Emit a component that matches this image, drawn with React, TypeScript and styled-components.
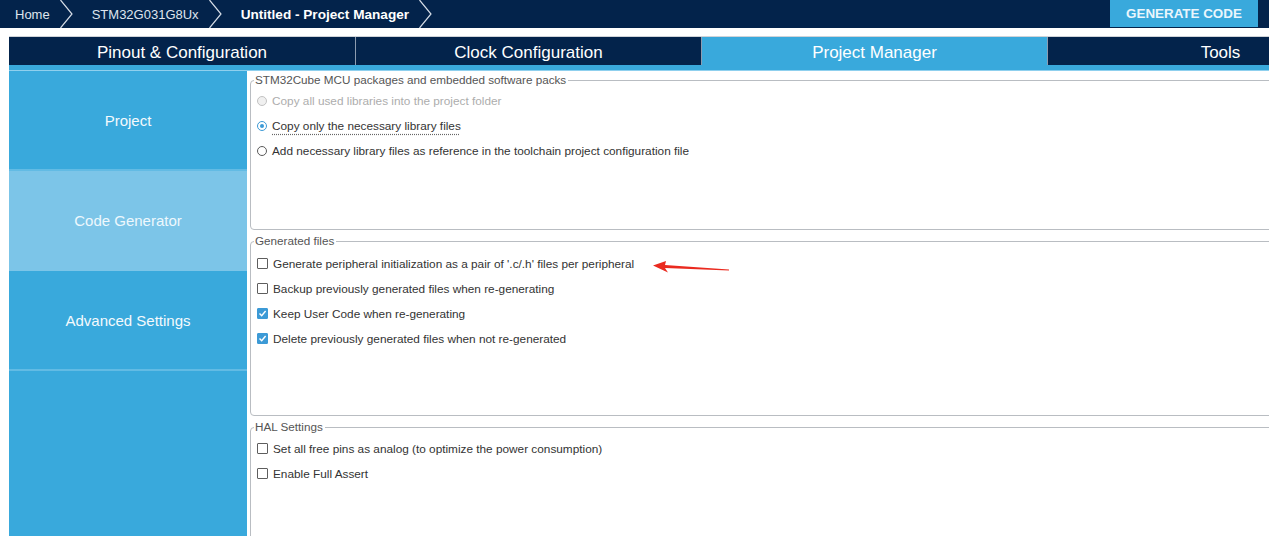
import { createGlobalStyle, styled } from "styled-components"

const NAVY = "#03234b"
const BLUE = "#39a9dc"

const GlobalStyle = createGlobalStyle`
    html, body {
        margin: 0;
        padding: 0;
        background: #ffffff;
        overflow: hidden;
    }
    body {
        font-family: "Liberation Sans", Arial, sans-serif;
    }
`
const Page = styled.div`
    position: relative;
    width: 1269px;
    height: 536px;
    overflow: hidden;
    display: flex;
    flex-direction: column;
`
const TopBar = styled.div`
    height: 28px;
    flex-shrink: 0;
    background: ${NAVY};
    display: flex;
    align-items: center;
    padding-left: 15px;
`
const Crumb = styled.span<{ $current?: boolean }>`
    font-size: ${p => (p.$current ? "13.6px" : "13px")};
    color: ${p => (p.$current ? "#ffffff" : "#dfe5ee")};
    font-weight: ${p => (p.$current ? "bold" : "normal")};
    white-space: nowrap;
`
const Chevron = styled.svg`
    width: 13px;
    height: 28px;
    margin: 0 19px 0 10px;
    flex-shrink: 0;
`
const GenerateButton = styled.button`
    margin-left: auto;
    margin-right: 11px;
    align-self: flex-start;
    height: 27px;
    width: 148px;
    border: none;
    background: ${BLUE};
    color: #eaf6fc;
    font-family: inherit;
    font-size: 13.4px;
    font-weight: bold;
    padding: 0;
`
const Main = styled.div`
    flex: 1;
    display: flex;
    flex-direction: column;
    padding: 8px 0 0 9px;
    min-height: 0;
`
const TabBar = styled.div`
    height: 28px;
    flex-shrink: 0;
    display: flex;
    background: ${NAVY};
    border-top: 1px solid #cfd3d8;
`
const Tab = styled.div<{ $active?: boolean }>`
    width: 346px;
    flex-shrink: 0;
    box-sizing: border-box;
    display: flex;
    align-items: center;
    justify-content: center;
    padding-top: 3px;
    font-size: 17px;
    color: #ffffff;
    background: ${p => (p.$active ? BLUE : NAVY)};
    border-left: 1px solid #8d9cb0;
    &:first-child {
        border-left: none;
    }
`
const TabStrip = styled.div`
    height: 5px;
    flex-shrink: 0;
    background: ${BLUE};
    border-bottom: 1px solid #8fd0ee;
`
const Body = styled.div`
    flex: 1;
    display: flex;
    min-height: 0;
`
const Sidebar = styled.div`
    width: 238px;
    flex-shrink: 0;
    background: ${BLUE};
    display: flex;
    flex-direction: column;
`
const SideItem = styled.div<{ $active?: boolean }>`
    height: 98px;
    display: flex;
    align-items: center;
    justify-content: center;
    font-size: 15px;
    color: ${p => (p.$active ? "#eef8fd" : "#f4fafd")};
    background: ${p => (p.$active ? "#7cc5e8" : BLUE)};
    border-bottom: 2px solid ${p => (p.$active ? "#7cc5e8" : "#62bbe4")};
`
const Content = styled.div`
    flex: 1;
    display: flex;
    flex-direction: column;
    padding: 2px 0 0 3px;
    margin-right: -20px;
`
const Group = styled.fieldset<{ $height?: number }>`
    margin: 0 0 4px 0;
    padding: 0 0 0 6px;
    border: 1px solid #b9bdc2;
    border-radius: 4px;
    box-sizing: border-box;
    height: ${p => (p.$height ? `${p.$height}px` : "auto")};
    flex: ${p => (p.$height ? "none" : "1")};
    margin-bottom: ${p => (p.$height ? "4px" : "-10px")};
`
const Legend = styled.legend`
    font-size: 11.7px;
    line-height: 14px;
    color: #555555;
    padding: 0 2px 0 1px;
    margin-left: -3px;
`
const Options = styled.div<{ $top: number }>`
    display: flex;
    flex-direction: column;
    padding-top: ${p => p.$top}px;
`
const Option = styled.label<{ $disabled?: boolean }>`
    height: 25px;
    display: flex;
    align-items: center;
    gap: 5px;
    font-size: 11.8px;
    color: ${p => (p.$disabled ? "#adadad" : "#333333")};
    white-space: nowrap;
`
const Radio = styled.span<{ $checked?: boolean; $disabled?: boolean }>`
    width: 10px;
    height: 10px;
    box-sizing: border-box;
    border-radius: 50%;
    border: 1px solid ${p => (p.$disabled ? "#c2c2c2" : p.$checked ? "#3c9ad6" : "#5a5a5a")};
    background: ${p => (p.$disabled ? "#f0f0f0" : "#ffffff")};
    display: flex;
    align-items: center;
    justify-content: center;
    &::after {
        content: "";
        width: 4px;
        height: 4px;
        border-radius: 50%;
        background: #3c9ad6;
        display: ${p => (p.$checked ? "block" : "none")};
    }
`
const Check = styled.span<{ $checked?: boolean }>`
    width: 11px;
    height: 11px;
    box-sizing: border-box;
    border: 1px solid ${p => (p.$checked ? "#3c9ad6" : "#5e5e5e")};
    border-radius: 1px;
    background: ${p => (p.$checked ? "#3c9ad6" : "#ffffff")};
    display: flex;
    align-items: center;
    justify-content: center;
`
const Focused = styled.span`
    text-decoration: underline dotted #666666;
    text-underline-offset: 4px;
`
const Arrow = styled.svg`
    position: absolute;
    left: 650px;
    top: 257px;
    width: 84px;
    height: 18px;
`

function ChevronIcon() {
    return (
        <Chevron viewBox="0 0 13 28">
            <polyline points="0.5,0 12,14 0.5,28" fill="none" stroke="#d5dce6" strokeWidth="1.2" />
        </Chevron>
    )
}

function CheckBox({ checked }: { checked?: boolean }) {
    return (
        <Check $checked={checked}>
            {checked && (
                <svg width="9" height="9" viewBox="0 0 9 9">
                    <polyline points="1.5,4.5 3.7,6.8 7.6,2" fill="none" stroke="#ffffff" strokeWidth="1.4" />
                </svg>
            )}
        </Check>
    )
}

export default function App() {
    return (
        <Page>
            <GlobalStyle />
            <TopBar>
                <Crumb>Home</Crumb>
                <ChevronIcon />
                <Crumb>STM32G031G8Ux</Crumb>
                <ChevronIcon />
                <Crumb $current>Untitled - Project Manager</Crumb>
                <ChevronIcon />
                <GenerateButton>GENERATE CODE</GenerateButton>
            </TopBar>
            <Main>
                <TabBar>
                    <Tab>Pinout &amp; Configuration</Tab>
                    <Tab>Clock Configuration</Tab>
                    <Tab $active>Project Manager</Tab>
                    <Tab>Tools</Tab>
                </TabBar>
                <TabStrip />
                <Body>
                    <Sidebar>
                        <SideItem>Project</SideItem>
                        <SideItem $active>Code Generator</SideItem>
                        <SideItem>Advanced Settings</SideItem>
                    </Sidebar>
                    <Content>
                        <Group $height={157}>
                            <Legend>STM32Cube MCU packages and embedded software packs</Legend>
                            <Options $top={1}>
                                <Option $disabled>
                                    <Radio $disabled />
                                    Copy all used libraries into the project folder
                                </Option>
                                <Option>
                                    <Radio $checked />
                                    <Focused>Copy only the necessary library files</Focused>
                                </Option>
                                <Option>
                                    <Radio />
                                    Add necessary library files as reference in the toolchain project configuration file
                                </Option>
                            </Options>
                        </Group>
                        <Group $height={182}>
                            <Legend>Generated files</Legend>
                            <Options $top={3}>
                                <Option>
                                    <CheckBox />
                                    Generate peripheral initialization as a pair of '.c/.h' files per peripheral
                                </Option>
                                <Option>
                                    <CheckBox />
                                    Backup previously generated files when re-generating
                                </Option>
                                <Option>
                                    <CheckBox checked />
                                    Keep User Code when re-generating
                                </Option>
                                <Option>
                                    <CheckBox checked />
                                    Delete previously generated files when not re-generated
                                </Option>
                            </Options>
                        </Group>
                        <Group>
                            <Legend>HAL Settings</Legend>
                            <Options $top={2}>
                                <Option>
                                    <CheckBox />
                                    Set all free pins as analog (to optimize the power consumption)
                                </Option>
                                <Option>
                                    <CheckBox />
                                    Enable Full Assert
                                </Option>
                            </Options>
                        </Group>
                    </Content>
                </Body>
            </Main>
            <Arrow viewBox="0 0 84 18">
                <polygon points="3,8.5 16,4 15,8 79,12.5 79,13.5 15,11 18,15.5" fill="#ea2a1f" />
            </Arrow>
        </Page>
    )
}
